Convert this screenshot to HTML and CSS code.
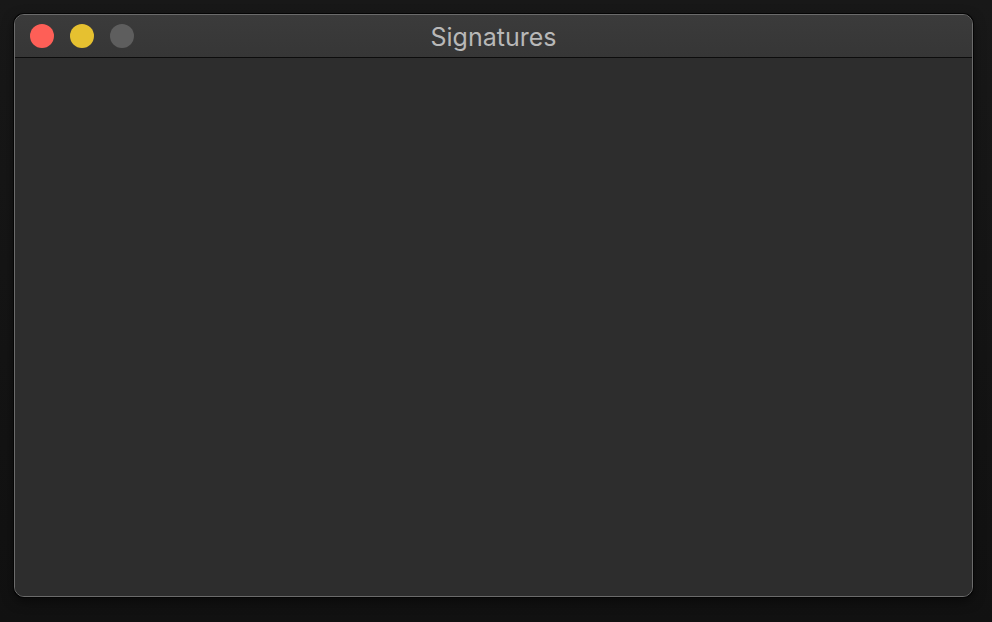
FILE: index.html
```html
<!DOCTYPE html>
<html>
<head>
<meta charset="utf-8">
<link rel="stylesheet" href="styles.css">
</head>
<body>
<div class="window">
  <div class="titlebar">
    <div class="lights">
      <span class="light red"></span>
      <span class="light yellow"></span>
      <span class="light gray"></span>
    </div>
    <div class="title">Signatures</div>
  </div>
  <div class="content"></div>
</div>
</body>
</html>
```
FILE: styles.css
```css
html, body {
  margin: 0;
  padding: 0;
  width: 992px;
  height: 622px;
  overflow: hidden;
}
body {
  background: linear-gradient(#181818, #111111);
  padding: 14px 0 0 14px;
  box-sizing: border-box;
  font-family: Inter, "Liberation Sans", Arial, sans-serif;
}
.window {
  width: 959px;
  height: 583px;
  box-sizing: border-box;
  border: 1px solid #6b6b6b;
  border-radius: 10px;
  box-shadow: 0 0 0 1px #050505, 0 4px 12px rgba(0,0,0,0.5);
  background: #2d2d2d;
  display: flex;
  flex-direction: column;
  overflow: hidden;
}
.titlebar {
  height: 42px;
  flex: none;
  background: linear-gradient(#3b3b3b, #363636);
  border-bottom: 1px solid #0c0c0c;
  display: flex;
  align-items: center;
  position: relative;
}
.lights {
  display: flex;
  gap: 16px;
  padding-left: 15px;
}
.light {
  width: 24px;
  height: 24px;
  border-radius: 50%;
  display: block;
}
.red { background: #fe5f57; }
.yellow { background: #e6c130; }
.gray { background: #5e5e5e; }
.title {
  position: absolute;
  left: 0;
  right: 0;
  top: 1px;
  bottom: 0;
  display: flex;
  align-items: center;
  justify-content: center;
  color: #b8b8b8;
  font-size: 25px;
}
.content {
  flex: 1;
  background: #2d2d2d;
}
```
